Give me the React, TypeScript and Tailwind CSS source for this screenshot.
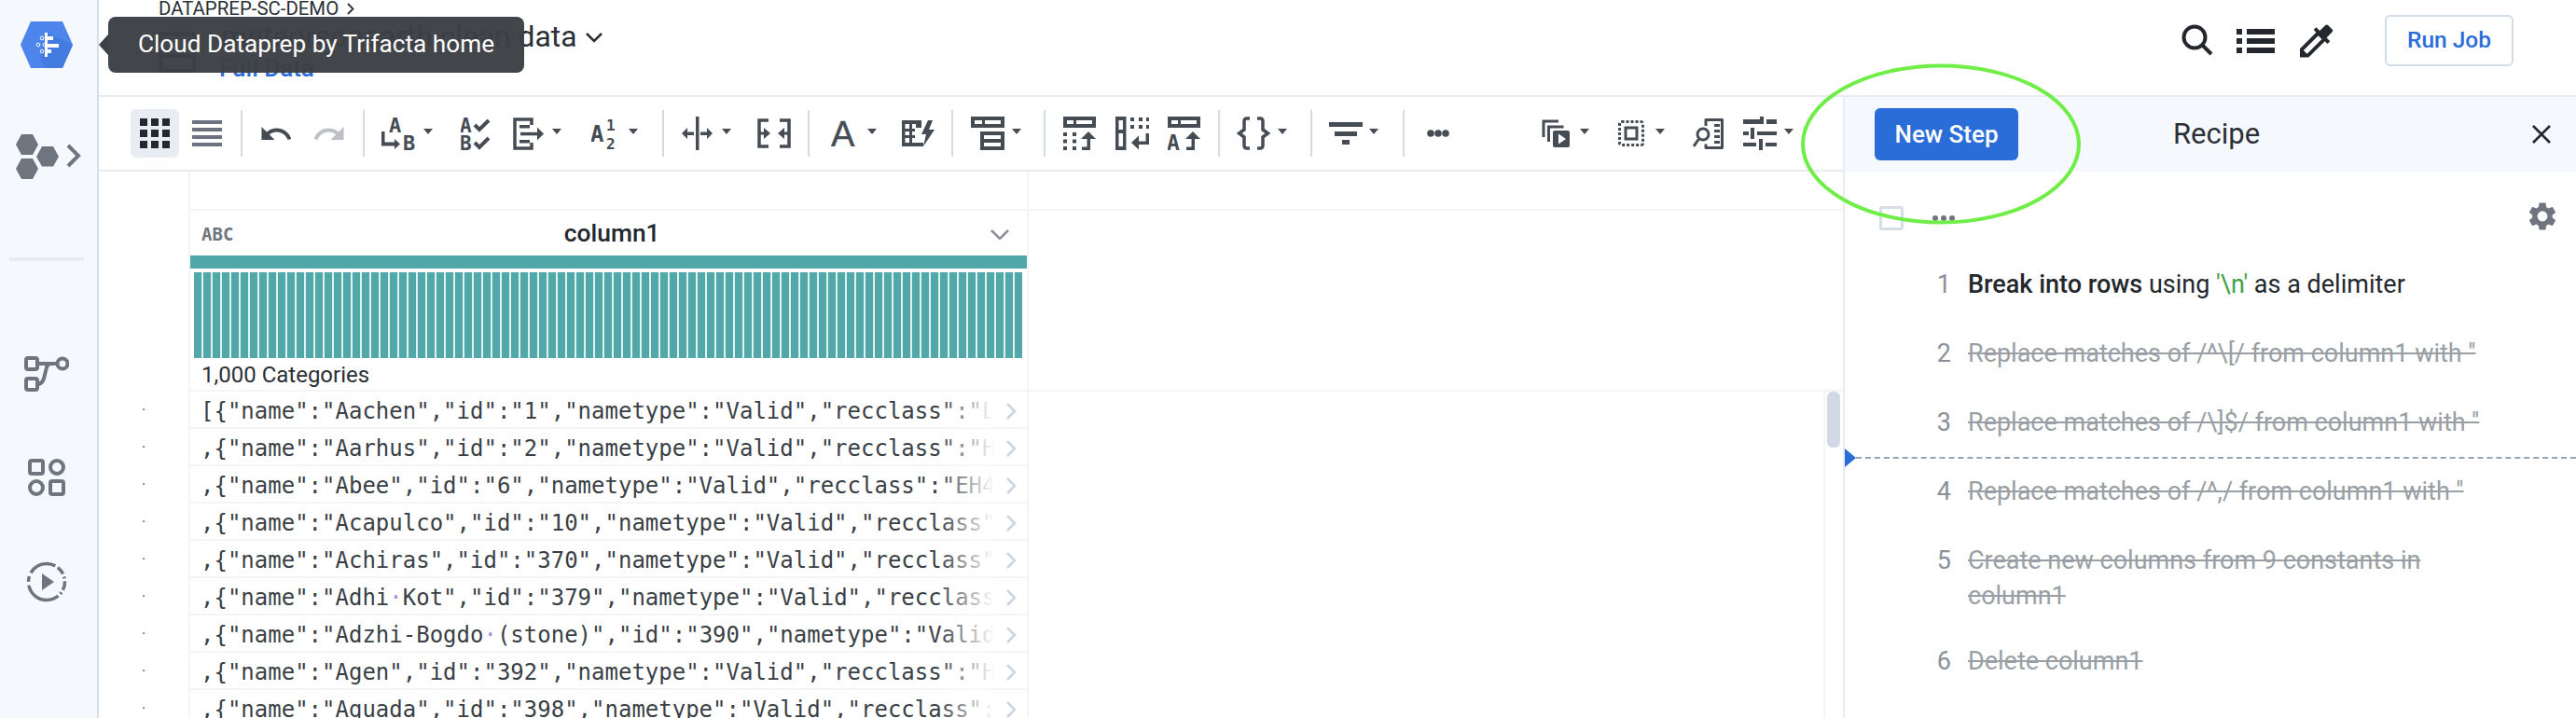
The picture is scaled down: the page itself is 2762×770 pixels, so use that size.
import { ReactNode } from "react";

const ROWS = [
  '[{"name":"Aachen","id":"1","nametype":"Valid","recclass":"L5","mass":"21"',
  ',{"name":"Aarhus","id":"2","nametype":"Valid","recclass":"H6","mass":"720"',
  ',{"name":"Abee","id":"6","nametype":"Valid","recclass":"EH4","mass":"107000"',
  ',{"name":"Acapulco","id":"10","nametype":"Valid","recclass":"Acapulcoite"',
  ',{"name":"Achiras","id":"370","nametype":"Valid","recclass":"L6","mass":"780"',
  ',{"name":"Adhi Kot","id":"379","nametype":"Valid","recclass":"EH4","mass":"4239"',
  ',{"name":"Adzhi-Bogdo (stone)","id":"390","nametype":"Valid","recclass":"LL3-6"',
  ',{"name":"Agen","id":"392","nametype":"Valid","recclass":"H5","mass":"30000"',
  ',{"name":"Aguada","id":"398","nametype":"Valid","recclass":"L6","mass":"1620"',
];

const STEPS = [
  "Replace matches of /^\\[/ from column1 with ''",
  "Replace matches of /\\]$/ from column1 with ''",
  "Replace matches of /^,/ from column1 with ''",
  "Create new columns from 9 constants in column1",
];

const ICON_LETTER = { fontFamily: "DejaVu Sans Mono", fontWeight: 700 };

const Caret = ({ className }: { className: string }) => (
  <svg viewBox="0 0 10 6" className={`mb-[4px] h-[6px] w-[10px] fill-[#464c54] ${className}`}>
    <path d="M0 0h10L5 6z" />
  </svg>
);

const Divider = ({ className }: { className: string }) => (
  <div className={`h-[50px] w-[2px] bg-[#d3dbe5] ${className}`} />
);

const Icon = ({ w, h, className, children }: { w: number; h: number; className: string; children: ReactNode }) => (
  <svg viewBox={`0 0 ${w} ${h}`} width={w} height={h} className={`shrink-0 fill-[#464c54] ${className}`}>
    {children}
  </svg>
);

const TopBar = () => (
  <>
    <rect x="0" y="0" width="35" height="12" />
    <rect x="4" y="4" width="7" height="4" fill="#fff" />
    <rect x="14" y="4" width="17" height="4" fill="#fff" />
  </>
);

const ArrowUp = () => (
  <>
    <path d="M29 36h-9v-3.500h5.500V23h3.500z" />
    <path d="M19 24l8-8 8 8z" />
  </>
);

const Toolbar = () => (
  <div className="flex h-[80px] shrink-0 items-center border-b-2 border-[#e8ecf1] pl-[34px]">
    <div className="flex h-[52px] w-[52px] shrink-0 items-center justify-center rounded-md bg-[#e8ecf3]">
      <svg viewBox="0 0 32 32" className="h-[32px] w-[32px] fill-[#24282e]">
        {[0, 12, 24].map((y) =>
          [0, 12, 24].map((x) => <rect key={`${x}-${y}`} x={x} y={y} width="8" height="8" />)
        )}
      </svg>
    </div>
    <Icon w={32} h={28} className="ml-[14px] !fill-[#6b7280]">
      <rect y="0" width="32" height="4" />
      <rect y="8" width="32" height="4" />
      <rect y="16" width="32" height="4" />
      <rect y="24" width="32" height="4" />
    </Icon>
    <Divider className="ml-[20px]" />
    <svg viewBox="2 7 20 9" className="ml-[20px] h-[14px] w-[32px] fill-[#464c54]">
      <path d="M12.5 8c-2.65 0-5.05.99-6.9 2.6L2 7v9h9l-3.62-3.62c1.39-1.16 3.16-1.88 5.12-1.88 3.54 0 6.55 2.31 7.6 5.5l2.37-.78C21.08 11.03 17.15 8 12.5 8z" />
    </svg>
    <svg viewBox="2 7 20 9" className="ml-[25px] h-[14px] w-[32px] -scale-x-100 fill-[#bdc0c4]">
      <path d="M12.5 8c-2.65 0-5.05.99-6.9 2.6L2 7v9h9l-3.62-3.62c1.39-1.16 3.16-1.88 5.12-1.88 3.54 0 6.55 2.31 7.6 5.5l2.37-.78C21.08 11.03 17.15 8 12.5 8z" />
    </svg>
    <Divider className="ml-[20px]" />

    <Icon w={36} h={35} className="ml-[18px]">
      <text x="8" y="16" fontSize="22" style={ICON_LETTER}>A</text>
      <text x="23" y="35" fontSize="22" style={ICON_LETTER}>B</text>
      <path d="M0 15h3.500v11.500H14V23l6 5.500-6 5.500v-3.500H0z" />
    </Icon>
    <Caret className="ml-[9px]" />
    <Icon w={33} h={35} className="ml-[30px]">
      <text x="-1" y="16" fontSize="21" style={ICON_LETTER}>A</text>
      <text x="-1" y="35" fontSize="21" style={ICON_LETTER}>B</text>
      <path d="M15 8l5 5 10-10M15 27l5 5 10-10" fill="none" stroke="#464c54" strokeWidth="4" />
    </Icon>
    <Icon w={33} h={35} className="ml-[23px]">
      <path d="M20 8V2H2v31h18v-6" fill="none" stroke="#464c54" strokeWidth="3.500" />
      <rect x="7" y="8" width="11" height="3.500" />
      <rect x="7" y="24" width="11" height="3.500" />
      <rect x="8" y="15.800" width="19" height="3.500" />
      <path d="M26 10.500l7 7-7 7z" />
    </Icon>
    <Caret className="ml-[9px]" />
    <Icon w={28} h={35} className="ml-[32px]">
      <text x="-1" y="26" fontSize="24" style={ICON_LETTER}>A</text>
      <text x="16" y="14" fontSize="16" style={ICON_LETTER}>1</text>
      <text x="16" y="34" fontSize="16" style={ICON_LETTER}>2</text>
    </Icon>
    <Caret className="ml-[12px]" />
    <Divider className="ml-[26px]" />

    <Icon w={33} h={36} className="ml-[19px]">
      <rect x="15" y="0" width="3.500" height="36" />
      <path d="M0 18l6-6v4.500h7v3.500H6V24zM33 18l-6-6v4.500h-7v3.500h7V24z" />
    </Icon>
    <Caret className="ml-[10px]" />
    <Icon w={36} h={32} className="ml-[28px]">
      <path d="M12 2H2v28h10M24 2h10v28H24" fill="none" stroke="#464c54" strokeWidth="3.500" />
      <path d="M7 10l7 6-7 6zM29 10l-7 6 7 6z" />
      <rect x="2" y="14.500" width="6" height="3" />
      <rect x="28" y="14.500" width="6" height="3" />
    </Icon>
    <Divider className="ml-[18px]" />

    <Icon w={26} h={28} className="ml-[23px]">
      <text x="0" y="28" fontSize="38" stroke="#464c54" strokeWidth="0.500" style={{ fontFamily: "Liberation Sans" }}>A</text>
    </Icon>
    <Caret className="ml-[13px]" />
    <Icon w={35} h={28} className="ml-[27px]">
      <path d="M0 0h21v8h-6v-4h-4v5h3v3h-3v4h3v3h-3v5h12v4H0zm3.500 4v5H8V4zm0 8v4H8v-4zm0 7v5H8v-5z" />
      <path d="M28 0l-7 15h5l-3 13 12-18h-6l4-10z" />
    </Icon>
    <Divider className="ml-[18px]" />

    <Icon w={36} h={36} className="ml-[19px]">
      <rect x="0" y="0" width="36" height="12" />
      <rect x="4" y="4" width="8" height="4" fill="#fff" />
      <rect x="15" y="4" width="17" height="4" fill="#fff" />
      <rect x="10" y="16" width="26" height="20" />
      <rect x="14" y="20" width="18" height="4" fill="#fff" />
      <rect x="14" y="28" width="18" height="4" fill="#fff" />
    </Icon>
    <Caret className="ml-[8px]" />
    <Divider className="ml-[24px]" />

    <Icon w={35} h={36} className="ml-[19px]">
      <TopBar />
      {[17, 24.500, 32].map((y) => (
        <g key={y}>
          <rect x="0" y={y} width="4" height="4" />
          <rect x="10" y={y} width="4" height="4" />
        </g>
      ))}
      <ArrowUp />
    </Icon>
    <Icon w={36} h={36} className="ml-[21px]">
      <path d="M0 0h11.500v36H0zm3.500 4v10H8V4zm0 14v14H8V18z" fillRule="evenodd" />
      {[16, 25, 33].map((x) => (
        <g key={x}>
          <rect x={x} y="1" width="4" height="4" />
          <rect x={x} y="9" width="4" height="4" />
        </g>
      ))}
      <path d="M36 18v12H24v-3.500h8.500V18z" />
      <path d="M25 20.500v15l-8-7.500z" />
    </Icon>
    <Icon w={35} h={36} className="ml-[20px]">
      <TopBar />
      <text x="-1" y="36" fontSize="23" style={ICON_LETTER}>A</text>
      <ArrowUp />
    </Icon>
    <Divider className="ml-[19px]" />

    <Icon w={36} h={36} className="ml-[18px]">
      <path
        d="M14 2h-3Q8 2 8 5v9l-5.500 4L8 22v9q0 3 3 3h3M22 2h3q3 0 3 3v9l5.500 4-5.500 4v9q0 3-3 3h-3"
        fill="none"
        stroke="#464c54"
        strokeWidth="3.500"
      />
    </Icon>
    <Caret className="ml-[8px]" />
    <Divider className="ml-[25px]" />

    <Icon w={36} h={24} className="ml-[18px]">
      <rect x="0" y="0" width="36" height="5" />
      <rect x="6" y="10" width="24" height="5" />
      <rect x="14" y="19" width="8" height="5" />
    </Icon>
    <Caret className="ml-[7px]" />
    <Divider className="ml-[26px]" />

    <Icon w={24} h={8} className="ml-[24px]">
      <circle cx="4" cy="4" r="3.800" />
      <circle cx="12" cy="4" r="3.800" />
      <circle cx="20" cy="4" r="3.800" />
    </Icon>

    <Icon w={30} h={30} className="ml-[99px]">
      <path d="M2 19V2h16M7.500 24V8h16" fill="none" stroke="#464c54" strokeWidth="3" />
      <path d="M14 12h14a2 2 0 012 2v14a2 2 0 01-2 2H14a2 2 0 01-2-2V14a2 2 0 012-2z" />
      <path d="M18 15.500l8 5.500-8 5.500z" fill="#fff" />
    </Icon>
    <Caret className="ml-[11px]" />
    <Icon w={28} h={28} className="ml-[31px]">
      <rect x="1.500" y="1.500" width="25" height="25" rx="2" fill="none" stroke="#464c54" strokeWidth="3" strokeDasharray="3 2" />
      <rect x="8" y="8" width="12" height="12" fill="none" stroke="#464c54" strokeWidth="3" />
    </Icon>
    <Caret className="ml-[12px]" />
    <Icon w={33} h={33} className="ml-[30px]">
      <path d="M14 8V1.500h17.500v30H14v-4" fill="none" stroke="#464c54" strokeWidth="3" strokeLinejoin="round" />
      <rect x="23" y="6" width="6" height="3" />
      <rect x="23" y="12" width="6" height="3" />
      <rect x="23" y="18" width="6" height="3" />
      <rect x="23" y="24" width="6" height="3" />
      <circle cx="11" cy="17" r="6" fill="none" stroke="#464c54" strokeWidth="3" />
      <path d="M6.500 22L1 30" stroke="#464c54" strokeWidth="3" />
    </Icon>
    <Icon w={36} h={36} className="ml-[21px]">
      <rect x="0" y="3" width="19" height="5" />
      <rect x="18" y="0" width="4" height="8" />
      <rect x="25" y="3" width="11" height="5" />
      <rect x="0" y="16" width="6" height="4" />
      <rect x="8" y="12" width="4" height="12" />
      <rect x="15" y="16" width="21" height="4" />
      <rect x="0" y="28" width="14" height="4" />
      <rect x="17" y="24" width="4" height="12" />
      <rect x="24" y="28" width="12" height="4" />
    </Icon>
    <Caret className="ml-[8px]" />
  </div>
);

const Sidebar = () => (
  <aside className="flex w-[106px] shrink-0 flex-col border-r-2 border-[#d6dee8] bg-[#f5f8fd] pt-[23px]">
    <svg viewBox="0 0 56 50" className="ml-[22px] h-[50px] w-[56px] shrink-0">
      <path d="M11 0h34l11 25-11 25H11L0 25z" fill="#4e85ec" />
      <path d="M27 12l29 13-11 25H26l-5-9z" fill="#447bdf" />
      <rect x="26" y="12" width="3" height="26" fill="#fff" />
      <rect x="29" y="16" width="6" height="4" fill="#fff" />
      <rect x="29" y="24" width="12" height="4" fill="#fff" />
      <rect x="29" y="30" width="4" height="4" fill="#fff" />
      <circle cx="23" cy="18" r="1.800" fill="none" stroke="#fff" strokeWidth="1" />
      <circle cx="19" cy="25" r="1.800" fill="none" stroke="#fff" strokeWidth="1" />
      <circle cx="26" cy="25" r="1.800" fill="none" stroke="#fff" strokeWidth="1" />
      <circle cx="23" cy="32" r="1.800" fill="none" stroke="#fff" strokeWidth="1" />
    </svg>
    <svg viewBox="0 0 70 48" className="ml-[17px] mt-[71px] h-[48px] w-[70px] shrink-0 fill-[#6e757e]">
      <path d="M6 0h12l6 11-6 11H6L0 11z" />
      <path d="M28 13h12l6 11-6 10.500H28L22 24z" />
      <path d="M6 26h12l6 11-6 11H6L0 37z" />
      <path d="M56 12l11 11-11 11" fill="none" stroke="#6e757e" strokeWidth="4" />
    </svg>
    <div className="ml-[10px] mt-[84px] h-[4px] w-[80px] shrink-0 bg-[#e9edf2]" />
    <svg viewBox="0 0 48 38" className="ml-[26px] mt-[102px] h-[38px] w-[48px] shrink-0">
      <g fill="none" stroke="#6e757e" strokeWidth="4">
        <rect x="2" y="2" width="12" height="12" rx="2" />
        <rect x="2" y="24" width="12" height="12" rx="2" />
        <circle cx="41" cy="8" r="5.500" />
        <path d="M14 8h21M14 30q5 0 7-6l3-12q1-4 5-4h6" />
      </g>
    </svg>
    <svg viewBox="0 0 40 40" className="ml-[30px] mt-[72px] h-[40px] w-[40px] shrink-0">
      <g fill="none" stroke="#6e757e" strokeWidth="4">
        <rect x="2" y="2" width="14" height="14" rx="2" />
        <circle cx="31" cy="9" r="7" />
        <circle cx="9" cy="31" r="7" />
        <rect x="24" y="24" width="14" height="14" rx="2" />
      </g>
    </svg>
    <svg viewBox="0 0 44 44" className="ml-[28px] mt-[70px] h-[44px] w-[44px] shrink-0">
      <circle cx="22" cy="22" r="19.500" fill="none" stroke="#6e757e" strokeWidth="3.500" strokeDasharray="9 3 2 3 40 4 6 4 30 3" />
      <path d="M17 13l13 9-13 9z" fill="#6e757e" />
    </svg>
  </aside>
);

const Row = ({ text }: { text: string }) => {
  const parts = text.split(" ");
  return (
    <div className="flex h-[40px] shrink-0 items-center border-b-2 border-[#f3f4f6] pl-[11px] pt-[3px]">
      <div className="relative w-[851px] overflow-hidden whitespace-nowrap">
        {parts.map((part, i) => (
          <span key={i}>
            {i > 0 && <span className="text-[#a78bda]">·</span>}
            {part}
          </span>
        ))}
        <div className="absolute inset-y-0 right-0 w-[60px] bg-linear-to-r from-transparent to-white" />
      </div>
      <svg viewBox="0 0 12 18" className="ml-[12px] h-[18px] w-[12px] shrink-0">
        <path d="M2 1l8 8-8 8" fill="none" stroke="#cbd5e1" strokeWidth="2.500" />
      </svg>
    </div>
  );
};

const DataGrid = () => (
  <div className="flex min-h-0 flex-1 overflow-hidden">
    <div className="flex w-[98px] shrink-0 flex-col items-center border-r-2 border-[#f3f4f6] pt-[236px]">
      {ROWS.map((_, i) => (
        <div key={i} className="flex h-[40px] shrink-0 items-center text-[#464c54]">·</div>
      ))}
    </div>
    <div className="flex w-[899px] shrink-0 flex-col border-r-2 border-[#f3f4f6] pt-[40px]">
      <div className="flex h-[50px] shrink-0 items-center justify-between border-t-2 border-[#f3f4f6] px-[12px] pt-[2px]">
        <span className="font-['DejaVu_Sans_Mono',monospace] text-[19px] leading-none font-bold text-[#6e757e]">ABC</span>
        <span className="text-[26.400px] font-medium text-[#24282e]">column1</span>
        <svg viewBox="0 0 20 11" className="mr-[7px] h-[11px] w-[20px]">
          <path d="M1 1l9 9 9-9" fill="none" stroke="#8b9097" strokeWidth="2.500" />
        </svg>
      </div>
      <div className="h-[14px] shrink-0 bg-[#52a7a9]" />
      <div className="mt-[4px] ml-[4px] mr-[6px] flex h-[92px] shrink-0 gap-[2px] bg-[#dff0ef]">
        {Array.from({ length: 89 }, (_, i) => (
          <div key={i} className="w-[8px] shrink-0 bg-[#52a7a9]" />
        ))}
      </div>
      <div className="flex h-[36px] shrink-0 items-center border-b-2 border-[#f3f4f6] pl-[12px] pt-[2px] text-[24px] text-[#2b2f36]">
        1,000 Categories
      </div>
      <div className="font-['DejaVu_Sans_Mono',monospace] text-[24px] text-[#3a3f46]">
        {ROWS.map((row) => (
          <Row key={row} text={row} />
        ))}
      </div>
    </div>
    <div className="flex flex-1 flex-col pt-[40px]">
      <div className="h-[196px] shrink-0 border-y-2 border-[#f3f4f6]" />
      <div className="flex flex-1 justify-end">
        <div className="flex w-[21px] border-l-2 border-[#f3f4f6] pl-[1px]">
          <div className="ml-[1px] h-[60px] w-[14px] rounded-md bg-[#d0d9e4]" />
        </div>
      </div>
    </div>
  </div>
);

const RecipePanel = () => (
  <section className="relative flex w-[786px] shrink-0 flex-col border-l-2 border-[#e8ecf3]">
    <div className="flex h-[80px] shrink-0 items-center bg-[#f5f8fd] pl-[32px]">
      <button className="h-[56px] w-[154px] rounded-md bg-[#2a6dd9] text-[26px] font-medium text-white">New Step</button>
      <div className="ml-[166px] text-[31px] text-[#2b2f36]">Recipe</div>
      <svg viewBox="0 0 20 20" className="ml-[292px] h-[20px] w-[20px]">
        <path d="M1 1l18 18M19 1L1 19" stroke="#24282e" strokeWidth="2.600" />
      </svg>
    </div>
    <div className="flex h-[102px] shrink-0 items-start pl-[37px] pt-[37px]">
      <div className="h-[26px] w-[26px] rounded-[3px] border-[3px] border-[#d5dde7]" />
      <svg viewBox="0 0 24 6" className="ml-[31px] mt-[10px] h-[6px] w-[24px] fill-[#6e757e]">
        <circle cx="3" cy="3" r="3" />
        <circle cx="12" cy="3" r="3" />
        <circle cx="21" cy="3" r="3" />
      </svg>
      <svg viewBox="2 2 20 20" className="ml-[615px] -mt-[4px] h-[30px] w-[30px] fill-[#6e757e]">
        <path d="M19.140 12.940c.040-.300.060-.610.060-.940 0-.320-.020-.640-.070-.940l2.030-1.580c.180-.140.230-.410.120-.610l-1.920-3.320c-.120-.220-.370-.290-.590-.220l-2.390.960c-.500-.380-1.030-.700-1.620-.940l-.360-2.540c-.040-.240-.240-.410-.480-.410h-3.840c-.240 0-.430.170-.470.410l-.360 2.540c-.590.240-1.130.570-1.620.940l-2.390-.960c-.220-.080-.470 0-.590.220L2.740 8.870c-.120.210-.080.470.120.610l2.030 1.580c-.050.300-.090.630-.090.940s.020.640.070.940l-2.030 1.580c-.180.140-.230.410-.120.610l1.920 3.320c.120.220.370.290.590.220l2.390-.960c.500.380 1.030.700 1.620.940l.360 2.540c.050.240.240.410.480.410h3.840c.240 0 .440-.170.470-.410l.360-2.540c.590-.240 1.130-.560 1.620-.940l2.390.960c.220.080.470 0 .590-.220l1.920-3.320c.120-.220.070-.470-.120-.610l-2.010-1.580zM12 15.600c-1.980 0-3.600-1.620-3.600-3.600s1.620-3.600 3.600-3.600 3.600 1.620 3.600 3.600-1.620 3.600-3.600 3.600z" />
      </svg>
    </div>
    <div className="flex flex-col gap-[36px] text-[27px] leading-[38px]">
      <div className="flex">
        <span className="w-[132px] shrink-0 pr-[18px] text-right text-[#8a9099]">1</span>
        <p className="w-[570px] text-[#24282e]">
          <span className="font-medium">Break into rows</span> using <span className="text-[#43a047]">'\n'</span> as a delimiter
        </p>
      </div>
      {STEPS.map((step, i) => (
        <div key={step} className="flex">
          <span className="w-[132px] shrink-0 pr-[18px] text-right text-[#8a9099]">{i + 2}</span>
          <p className="w-[570px] text-[#9a9fa6] line-through">{step}</p>
        </div>
      ))}
      <div className="-mt-[4px] flex">
        <span className="w-[132px] shrink-0 pr-[18px] text-right text-[#8a9099]">6</span>
        <p className="w-[570px] text-[#9a9fa6] line-through">Delete column1</p>
      </div>
    </div>
    <div className="absolute top-[377px] left-0 flex h-[20px] w-full items-center">
      <div className="h-0 w-0 border-y-[10px] border-l-[12px] border-y-transparent border-l-[#2a6dd9]" />
      <div className="flex-1 border-t-2 border-dashed border-[#9aa6b6]" />
    </div>
  </section>
);

export default function App() {
  return (
    <div className="relative flex h-[770px] w-full overflow-hidden bg-white font-['Roboto',sans-serif]">
      <Sidebar />
      <div className="flex min-w-0 flex-1 flex-col">
        <header className="flex h-[104px] shrink-0 border-b-2 border-[#e8ecf1] pl-[64px]">
          <div className="flex flex-col">
            <div className="flex items-center text-[20.400px] leading-[18px] text-[#2b2f36]">
              DATAPREP-SC-DEMO
              <svg viewBox="0 0 8 13" className="ml-[9px] h-[13px] w-[8px]">
                <path d="M1 1l5.500 5.500L1 12" fill="none" stroke="#2b2f36" strokeWidth="1.800" />
              </svg>
            </div>
            <div className="mt-[2px] flex">
              <svg viewBox="0 0 40 44" className="mt-[14px] h-[44px] w-[40px] shrink-0">
                <path d="M2 2h36v40H2z" fill="none" stroke="#3a3f46" strokeWidth="4" />
                <path d="M2 26h36" stroke="#3a3f46" strokeWidth="4" />
              </svg>
              <div className="ml-[27px] flex flex-col">
                <div className="flex items-center text-[31.800px] leading-[38px] text-[#2b2f36]">
                  meteorsonearth clean data
                  <svg viewBox="0 0 18 11" className="ml-[10px] mt-[3px] h-[11px] w-[18px]">
                    <path d="M1 1l8 8 8-8" fill="none" stroke="#2b2f36" strokeWidth="2.500" />
                  </svg>
                </div>
                <div className="-ml-[2px] text-[26px] leading-[30px] font-medium text-[#2a6dd9]">Full Data</div>
              </div>
            </div>
          </div>
          <div className="ml-auto flex items-start pt-[16px] pr-[67px]">
            <svg viewBox="0 0 34 34" className="mt-[10px] h-[34px] w-[34px]">
              <circle cx="14" cy="14" r="11.500" fill="none" stroke="#24282e" strokeWidth="4" />
              <path d="M22 22l10 10" stroke="#24282e" strokeWidth="4" />
            </svg>
            <svg viewBox="0 0 41 26" className="ml-[25px] mt-[15px] h-[26px] w-[41px] fill-[#24282e]">
              <rect x="0" y="0" width="6" height="6" />
              <rect x="11" y="0" width="30" height="6" />
              <rect x="0" y="10" width="6" height="6" />
              <rect x="11" y="10" width="30" height="6" />
              <rect x="0" y="20" width="6" height="6" />
              <rect x="11" y="20" width="30" height="6" />
            </svg>
            <svg viewBox="3 3 18.400 18" className="ml-[27px] mt-[10px] h-[36px] w-[36px] fill-[#24282e]">
              <path d="M20.710 5.630l-2.340-2.340c-.390-.390-1.020-.390-1.410 0l-3.120 3.120-1.930-1.910-1.410 1.410 1.420 1.420L3 16.250V21h4.750l8.920-8.920 1.420 1.420 1.410-1.410-1.920-1.920 3.120-3.120c.400-.400.400-1.030.010-1.420zM6.920 19L5 17.080l8.060-8.060 1.920 1.920L6.920 19z" />
            </svg>
            <button className="ml-[55px] h-[55px] w-[138px] rounded-md border-2 border-[#d3dde9] text-[24.500px] font-medium text-[#2a6dd9]">Run Job</button>
          </div>
        </header>
        <div className="flex min-h-0 flex-1">
          <main className="flex min-w-0 flex-1 flex-col">
            <Toolbar />
            <DataGrid />
          </main>
          <RecipePanel />
        </div>
      </div>

      {/* tooltip over the title */}
      <div className="absolute top-[18px] left-[106px] flex items-center">
        <div className="h-0 w-0 border-y-[11px] border-r-[10px] border-y-transparent border-r-[#3c3f44]" />
        <div className="flex h-[60px] w-[446px] items-center justify-center rounded-lg bg-[#3c3f44]/97 text-[26.200px] text-white">
          Cloud Dataprep by Trifacta home
        </div>
      </div>

      {/* hand drawn highlight round New Step */}
      <svg viewBox="0 0 310 180" className="pointer-events-none absolute top-[65px] left-[1926px] h-[180px] w-[310px]">
        <ellipse cx="155" cy="89.500" rx="148" ry="84" fill="none" stroke="#6fee47" strokeWidth="4" />
      </svg>
    </div>
  );
}
